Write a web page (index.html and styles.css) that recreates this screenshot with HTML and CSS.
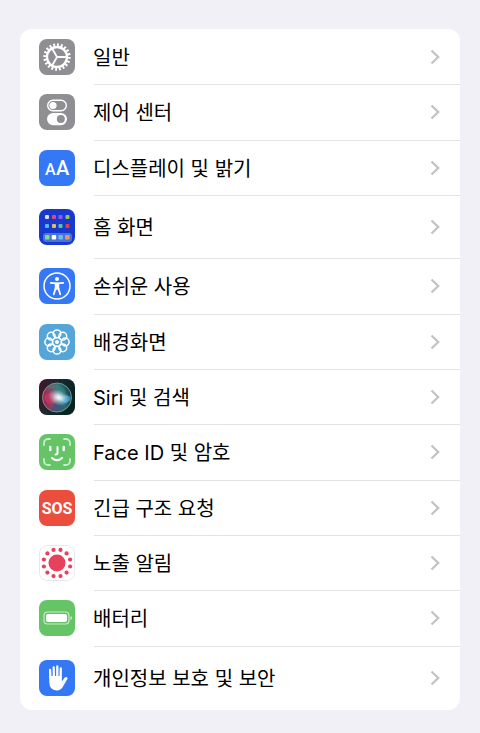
FILE: index.html
```html
<!DOCTYPE html>
<html lang="ko">
<head>
  <meta charset="UTF-8" />
  <title>설정</title>
  <meta name="viewport" content="width=device-width, initial-scale=1.0" />
  <link rel="stylesheet" href="styles.css">
</head>
<body>

<svg class="defs" aria-hidden="true">
  <defs>
    <symbol id="chevron" viewBox="0 0 10 16">
      <path d="M1.5 1.5 8.2 8l-6.7 6.5" fill="none" stroke="#c3c3c6" stroke-width="2.3"/>
    </symbol>
    <radialGradient id="siriGlow">
      <stop offset="0" stop-color="#fff"/>
      <stop offset=".3" stop-color="#e4f4f8" stop-opacity=".8"/>
      <stop offset="1" stop-color="#9fdde8" stop-opacity="0"/>
    </radialGradient>
    <linearGradient id="siriBg" x1="0" y1="0" x2="1" y2=".3">
      <stop offset="0" stop-color="#4a1029"/>
      <stop offset=".5" stop-color="#182b30"/>
      <stop offset="1" stop-color="#07241f"/>
    </linearGradient>
    <linearGradient id="siriOrb" x1="0" y1=".6" x2="1" y2=".4">
      <stop offset="0" stop-color="#a51f50"/>
      <stop offset=".42" stop-color="#785568"/>
      <stop offset=".6" stop-color="#37777f"/>
      <stop offset="1" stop-color="#14434d"/>
    </linearGradient>
  </defs>
</svg>

<main>
  <nav class="settings">
    <a class="row" href="#general">
      <svg class="icon gray" viewBox="0 0 36 36">
        <g fill="none" stroke="#fff">
          <circle cx="18" cy="18" r="10" stroke-width="2.3"/>
          <circle cx="18" cy="18" r="12.2" stroke-width="3" pathLength="40" stroke-dasharray="1 1"/>
          <path d="M18 18h10M18 18l-5-8.7M18 18l-5 8.7" stroke-width="1.8"/>
        </g>
      </svg>
      <span class="label">일반</span>
      <svg class="chevron"><use href="#chevron"/></svg>
    </a>
    <a class="row" href="#control">
      <svg class="icon gray" viewBox="0 0 36 36">
        <rect x="8.7" y="6.2" width="18.6" height="10.6" rx="5.3" fill="none" stroke="#fff" stroke-width="1.4"/>
        <circle cx="14" cy="11.5" r="3.6" fill="#fff"/>
        <rect x="8" y="19" width="20" height="12.2" rx="6.1" fill="#fff"/>
        <circle cx="21.8" cy="25.1" r="4" fill="#8e8e93"/>
      </svg>
      <span class="label">제어 센터</span>
      <svg class="chevron"><use href="#chevron"/></svg>
    </a>
    <a class="row" href="#display">
      <svg class="icon blue" viewBox="0 0 36 36">
        <text class="aa" x="6" y="25" font-size="16">A</text>
        <text class="aa" x="17" y="25" font-size="20">A</text>
      </svg>
      <span class="label">디스플레이 및 밝기</span>
      <svg class="chevron"><use href="#chevron"/></svg>
    </a>
    <a class="row tall" href="#home">
      <svg class="icon navy" viewBox="0 0 36 36">
        <rect x="4" y="24" width="29" height="9" rx="3" fill="#4b72d8"/>
        <rect x="6" y="6" width="4" height="4" rx="1" fill="#e5dfdc"/>
        <rect x="13" y="6" width="4" height="4" rx="1" fill="#df4a72"/>
        <rect x="19.5" y="6" width="4" height="4" rx="1" fill="#9659e5"/>
        <rect x="26.5" y="6" width="4" height="4" rx="1" fill="#9bc54e"/>
        <rect x="6" y="15" width="4" height="4" rx="1" fill="#59b7f0"/>
        <rect x="13" y="15" width="4" height="4" rx="1" fill="#edbc55"/>
        <rect x="19.5" y="15" width="4" height="4" rx="1" fill="#58c88d"/>
        <rect x="26.5" y="15" width="4" height="4" rx="1" fill="#e93e35"/>
        <rect x="6" y="26" width="4.5" height="4.5" rx="1" fill="#84df82"/>
        <rect x="12.7" y="26" width="4.5" height="4.5" rx="1" fill="#fff"/>
        <rect x="19.4" y="26" width="4.5" height="4.5" rx="1" fill="#68bdf1"/>
        <rect x="26.1" y="26" width="4.5" height="4.5" rx="1" fill="#e59a5c"/>
      </svg>
      <span class="label">홈 화면</span>
      <svg class="chevron"><use href="#chevron"/></svg>
    </a>
    <a class="row" href="#accessibility">
      <svg class="icon blue" viewBox="0 0 36 36">
        <circle cx="18" cy="18" r="13" fill="none" stroke="#fff" stroke-width="1.5"/>
        <circle cx="18" cy="11" r="2" fill="#fff"/>
        <path d="M11.8 14.8 17 15.3h2l5.2-.5M16.7 20l-1.9 6.3M19.3 20l1.9 6.3" fill="none" stroke="#fff" stroke-width="1.8" stroke-linecap="round"/>
        <path d="M15.8 14.8h4.4v6l-1 1h-2.4l-1-1z" fill="#fff"/>
      </svg>
      <span class="label">손쉬운 사용</span>
      <svg class="chevron"><use href="#chevron"/></svg>
    </a>
    <a class="row" href="#wallpaper">
      <svg class="icon sky" viewBox="0 0 36 36">
        <g fill="none" stroke="#fff" stroke-width="1.5">
          <circle cx="18" cy="9.8" r="3.9"/>
          <circle cx="23.8" cy="12.2" r="3.9"/>
          <circle cx="26.2" cy="18" r="3.9"/>
          <circle cx="23.8" cy="23.8" r="3.9"/>
          <circle cx="18" cy="26.2" r="3.9"/>
          <circle cx="12.2" cy="23.8" r="3.9"/>
          <circle cx="9.8" cy="18" r="3.9"/>
          <circle cx="12.2" cy="12.2" r="3.9"/>
          <circle cx="18" cy="18" r="4.5"/>
        </g>
        <circle cx="18" cy="18" r="2" fill="#fff"/>
      </svg>
      <span class="label">배경화면</span>
      <svg class="chevron"><use href="#chevron"/></svg>
    </a>
    <a class="row" href="#siri">
      <svg class="icon" viewBox="0 0 36 36">
        <rect width="36" height="36" fill="url(#siriBg)"/>
        <circle cx="18" cy="18.500" r="14.5" fill="url(#siriOrb)" stroke="#77938f" stroke-width="1"/>
        <path d="M7 9c8-6 17-3 20 5-6-4-13-5-20-5z" fill="#348a78" opacity=".6"/>
        <path d="M5 18c3-6 10-6 15 0-5 9-13 9-15 0z" fill="#dc3464" opacity=".6"/>
        <path d="M20 19c5-4 10-3 12 0-2 6-8 7-12 0z" fill="#3b9fd0" opacity=".8"/>
        <path d="M12 31c3-6 5-9 8-11 2 4 4 7 6 9-4 4-9 4-14 2z" fill="#30557f" opacity=".7"/>
        <ellipse cx="20" cy="18.5" rx="11" ry="8" fill="url(#siriGlow)" transform="rotate(20 20 18)"/>
      </svg>
      <span class="label">Siri 및 검색</span>
      <svg class="chevron"><use href="#chevron"/></svg>
    </a>
    <a class="row" href="#faceid">
      <svg class="icon green" viewBox="0 0 36 36">
        <g fill="none" stroke="#fff" stroke-linecap="round">
          <path d="M5 11V9a4 4 0 0 1 4-4h2M25 5h2a4 4 0 0 1 4 4v2M31 25v2a4 4 0 0 1-4 4h-2M11 31H9a4 4 0 0 1-4-4v-2" stroke="#c7edc8" stroke-width="1.8"/>
          <path d="M11.3 13v3M24.700 13v3" stroke-width="2.4"/>
          <path d="M18.5 13v6q0 1.5-2 1.5" stroke-width="2"/>
          <path d="M13 24q5 4.400 10 0" stroke-width="2.2"/>
        </g>
      </svg>
      <span class="label">Face ID 및 암호</span>
      <svg class="chevron"><use href="#chevron"/></svg>
    </a>
    <a class="row" href="#sos">
      <svg class="icon red" viewBox="0 0 36 36">
        <text class="sos" x="18" y="24">SOS</text>
      </svg>
      <span class="label">긴급 구조 요청</span>
      <svg class="chevron"><use href="#chevron"/></svg>
    </a>
    <a class="row" href="#exposure">
      <svg class="icon white" viewBox="0 0 36 36">
        <rect x=".5" y=".5" width="35" height="35" rx="7.5" fill="#fff" stroke="#e8e8ea"/>
        <circle cx="18" cy="18" r="8.5" fill="#e8415c"/>
        <g fill="#e8415c">
          <circle cx="21.5" cy="4.9" r="2.1"/>
          <circle cx="27.6" cy="8.4" r="2.1"/>
          <circle cx="31.1" cy="14.5" r="2.1"/>
          <circle cx="31.1" cy="21.5" r="2.1"/>
          <circle cx="27.6" cy="27.6" r="2.1"/>
          <circle cx="21.5" cy="31.1" r="2.1"/>
          <circle cx="14.5" cy="31.1" r="2.1"/>
          <circle cx="8.4" cy="27.6" r="2.1"/>
          <circle cx="4.9" cy="21.5" r="2.1"/>
          <circle cx="4.9" cy="14.5" r="2.1"/>
          <circle cx="8.4" cy="8.4" r="2.1"/>
          <circle cx="14.5" cy="4.9" r="2.1"/>
        </g>
      </svg>
      <span class="label">노출 알림</span>
      <svg class="chevron"><use href="#chevron"/></svg>
    </a>
    <a class="row" href="#battery">
      <svg class="icon green" viewBox="0 0 36 36">
        <rect x="5" y="12" width="25" height="12" rx="3.5" fill="none" stroke="#c7edc8" stroke-width="1.2"/>
        <rect x="7" y="14" width="21" height="8" rx="2" fill="#fff"/>
        <path d="M31.5 16v4q1.6-.5 1.6-2t-1.6-2z" fill="#c7edc8"/>
      </svg>
      <span class="label">배터리</span>
      <svg class="chevron"><use href="#chevron"/></svg>
    </a>
    <a class="row tall" href="#privacy">
      <svg class="icon blue" viewBox="0 0 36 36">
        <path d="M11.4 18l-.3-8M14.9 17l-.2-9.700M18.3 17V6.500M21.600 18l.2-9.500" stroke="#fff" stroke-width="2.3" stroke-linecap="round"/>
        <path d="M10.3 16h12.500v5.500l2.8-3.700q1.2-1.200 2.600-.4.700.6.2 1.500l-4.400 7.600Q22 30.500 17.500 30.500 10.300 30 10.300 22z" fill="#fff"/>
      </svg>
      <span class="label">개인정보 보호 및 보안</span>
      <svg class="chevron"><use href="#chevron"/></svg>
    </a>
  </nav>
</main>

</body>
</html>
```
FILE: styles.css
```css
body {
  margin: 0;
  background: #f1f0f6;
  color: #000;
  font-family: Inter, "Noto Sans CJK KR", sans-serif;
}

main {
  padding: 29px 20px 23px;
}

.defs {
  position: absolute;
  width: 0;
  height: 0;
}

.settings {
  background: #fff;
  border-radius: 12px;
  padding-bottom: 1px;
  overflow: hidden;
}

.row {
  display: flex;
  align-items: center;
  gap: 18px;
  height: 55px;
  padding: 0 20px 0 19px;
  color: inherit;
  text-decoration: none;
  /* separator starts over the label */
  background: linear-gradient(#e3e3e5, #e3e3e5) 74px 0 / 100% 1px no-repeat;
}

.row:nth-child(3n+2) {
  height: 56px;
}

.row.tall {
  height: 63px;
}

.row:first-child {
  background: none;
}

.icon {
  flex: none;
  width: 36px;
  height: 36px;
  border-radius: 8px;
}

.gray { background: #8e8e93; }
.blue { background: #3478f6; }
.navy { background: #1739d0; }
.sky { background: #54a5d8; }
.green { background: #65c466; }
.red { background: #eb4e3d; }
.white { background: #fff; }

.aa {
  fill: #fff;
  font-family: Roboto, sans-serif;
  font-weight: 500;
}

.sos {
  fill: #fff;
  font-family: Roboto, sans-serif;
  font-size: 16px;
  font-weight: bold;
  text-anchor: middle;
}

.label {
  flex: 1;
  padding-top: 2px;
  font-size: 20px;
  line-height: 28px;
}

.chevron {
  flex: none;
  width: 10px;
  height: 16px;
}
```
